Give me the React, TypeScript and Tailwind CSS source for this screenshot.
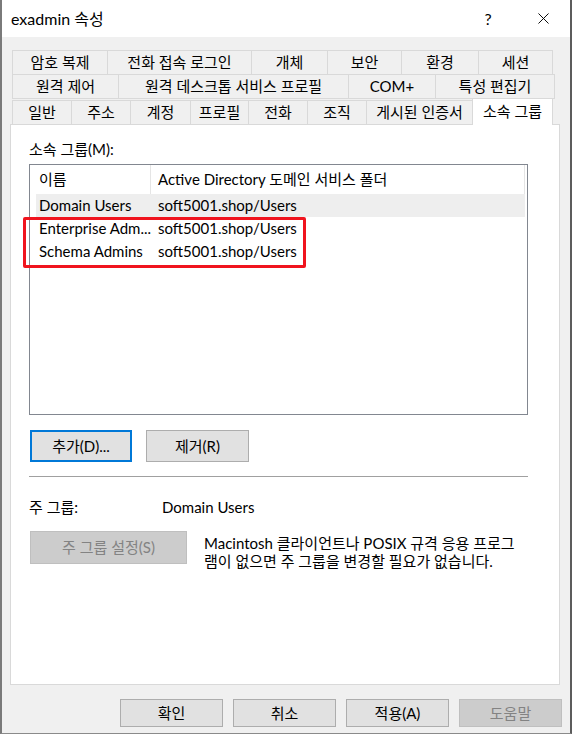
import { X } from "lucide-react";

const font = { fontFamily: 'Lato, "Noto Sans CJK KR", sans-serif' };

const row1 = [
  { label: "암호 복제", w: "w-[96px]" },
  { label: "전화 접속 로그인", w: "w-[145px]" },
  { label: "개체", w: "w-[77px]" },
  { label: "보안", w: "w-[75px]" },
  { label: "환경", w: "w-[78px]" },
  { label: "세션", w: "w-[75px]" },
];

const row2 = [
  { label: "원격 제어", w: "w-[107px]" },
  { label: "원격 데스크톱 서비스 프로필", w: "w-[231px]" },
  { label: "COM+", w: "w-[88px]" },
  { label: "특성 편집기", w: "w-[120px]" },
];

const row3 = [
  { label: "일반", w: "w-[60px]" },
  { label: "주소", w: "w-[60px]" },
  { label: "계정", w: "w-[61px]" },
  { label: "프로필", w: "w-[59px]" },
  { label: "전화", w: "w-[60px]" },
  { label: "조직", w: "w-[60px]" },
  { label: "게시된 인증서", w: "w-[107px]" },
];

const groups = [
  { name: "Domain Users", folder: "soft5001.shop/Users", hover: true },
  { name: "Enterprise Adm...", folder: "soft5001.shop/Users", hover: false },
  { name: "Schema Admins", folder: "soft5001.shop/Users", hover: false },
];

function Tab({ label, w }: { label: string; w: string }) {
  return (
    <div
      className={`${w} h-[25px] shrink-0 flex items-center justify-center border border-[#d9d9d9] -ml-px first:ml-0 bg-[#f0f0f0] text-black`}
    >
      {label}
    </div>
  );
}

export default function App() {
  return (
    <div
      style={font}
      className="w-[572px] h-[734px] flex flex-col bg-[#f0f0f0] border-l-2 border-r-2 border-b border-l-[#7a7a7a] border-r-[#5c5c5c] border-b-[#8a8a8a] text-[15px] text-black overflow-hidden"
    >
      {/* title bar */}
      <div className="h-[37px] shrink-0 bg-white flex items-center pl-[9px]">
        <span className="text-[16px] flex-1">exadmin 속성</span>
        <span className="w-[20px] text-center text-[16px] mr-[36px]">?</span>
        <X size={19} strokeWidth={1.2} className="mr-[17px]" />
      </div>

      {/* tabs */}
      <div className="ml-[8px] mt-[13px] flex flex-col">
        <div className="flex pl-[2px]">
          {row1.map((t) => (
            <Tab key={t.label} {...t} />
          ))}
        </div>
        <div className="flex pl-[2px] -mt-px">
          {row2.map((t) => (
            <Tab key={t.label} {...t} />
          ))}
        </div>
        <div className="flex items-end pl-[2px] -mt-px relative z-10 -mb-px">
          {row3.map((t) => (
            <Tab key={t.label} {...t} />
          ))}
          <div className="w-[81px] h-[27px] -ml-px flex items-center justify-center bg-white border border-b-0 border-[#d9d9d9] pb-[2px]">
            소속 그룹
          </div>
        </div>

        {/* panel */}
        <div className="w-[550px] h-[561px] bg-white border border-[#d9d9d9] pt-[15px] pl-[18px]">
          <div className="leading-[18px]">소속 그룹(M):</div>

          <div className="relative mt-[6px] w-[499px] h-[251px] border border-[#828790] bg-white">
            <div className="flex h-[29px] items-center">
              <div className="w-[121px] h-full flex items-center pl-[9px] border-r border-[#e5e5e5]">
                이름
              </div>
              <div className="flex-1 h-full flex items-center pl-[7px] border-r border-[#e5e5e5] mr-[2px]">
                Active Directory 도메인 서비스 폴더
              </div>
            </div>
            {groups.map((g) => (
              <div
                key={g.name}
                className={`flex h-[23px] items-center ml-[6px] mr-[2px] ${g.hover ? "bg-[#eeeeee]" : ""}`}
              >
                <div className="w-[115px] pl-[3px] whitespace-nowrap">{g.name}</div>
                <div className="pl-[7px]">{g.folder}</div>
              </div>
            ))}
            {/* annotation */}
            <div className="absolute left-[-7px] top-[52px] w-[283px] h-[51px] border-[3px] border-[#f0141e] rounded-[2px]" />
          </div>

          <div className="flex gap-[14px] mt-[15px] ml-px">
            <button className="w-[102px] h-[32px] bg-[#e1e1e1] border-2 border-[#0078d7]">
              추가(D)...
            </button>
            <button className="w-[103px] h-[32px] bg-[#e1e1e1] border border-[#adadad]">
              제거(R)
            </button>
          </div>

          <div className="mt-[14px] w-[499px] h-px bg-[#a0a0a0]" />

          <div className="flex mt-[21px] leading-[18px]">
            <div className="w-[133px]">주 그룹:</div>
            <div>Domain Users</div>
          </div>

          <div className="flex mt-[15px] ml-px">
            <button className="w-[157px] h-[33px] shrink-0 bg-[#cccccc] border border-[#bfbfbf] text-[#838383]">
              주 그룹 설정(S)
            </button>
            <div className="ml-[17px] mt-[3px] leading-[18px] whitespace-nowrap">
              Macintosh 클라이언트나 POSIX 규격 응용 프로그
              <br />
              램이 없으면 주 그룹을 변경할 필요가 없습니다.
            </div>
          </div>
        </div>
      </div>

      {/* dialog buttons */}
      <div className="flex justify-end gap-[10px] mt-[14px] pr-[8px]">
        <button className="w-[103px] h-[28px] bg-[#e1e1e1] border border-[#adadad]">확인</button>
        <button className="w-[103px] h-[28px] bg-[#e1e1e1] border border-[#adadad]">취소</button>
        <button className="w-[103px] h-[28px] bg-[#e1e1e1] border border-[#adadad]">적용(A)</button>
        <button className="w-[103px] h-[28px] bg-[#cccccc] border border-[#bfbfbf] text-[#838383]">
          도움말
        </button>
      </div>
    </div>
  );
}
